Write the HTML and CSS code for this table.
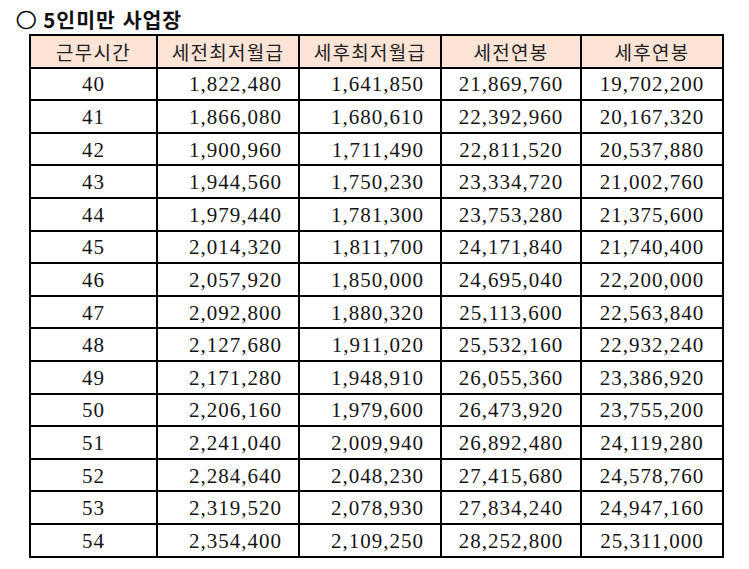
FILE: index.html
```html
<!DOCTYPE html>
<html lang="ko">
<head>
<meta charset="utf-8">
<link rel="stylesheet" href="styles.css">
</head>
<body>
<div class="page">
  <h1 class="title"><span class="circle">○</span> 5인미만 사업장</h1>
  <table class="wage">
    <colgroup>
      <col class="c1"><col class="c2"><col class="c3"><col class="c4"><col class="c5">
    </colgroup>
    <thead>
      <tr><th>근무시간</th><th>세전최저월급</th><th>세후최저월급</th><th>세전연봉</th><th>세후연봉</th></tr>
    </thead>
    <tbody>
      <tr><td class="ctr">40</td><td class="r">1,822,480</td><td class="r">1,641,850</td><td class="ctr">21,869,760</td><td class="ctr">19,702,200</td></tr>
      <tr><td class="ctr">41</td><td class="r">1,866,080</td><td class="r">1,680,610</td><td class="ctr">22,392,960</td><td class="ctr">20,167,320</td></tr>
      <tr><td class="ctr">42</td><td class="r">1,900,960</td><td class="r">1,711,490</td><td class="ctr">22,811,520</td><td class="ctr">20,537,880</td></tr>
      <tr><td class="ctr">43</td><td class="r">1,944,560</td><td class="r">1,750,230</td><td class="ctr">23,334,720</td><td class="ctr">21,002,760</td></tr>
      <tr><td class="ctr">44</td><td class="r">1,979,440</td><td class="r">1,781,300</td><td class="ctr">23,753,280</td><td class="ctr">21,375,600</td></tr>
      <tr><td class="ctr">45</td><td class="r">2,014,320</td><td class="r">1,811,700</td><td class="ctr">24,171,840</td><td class="ctr">21,740,400</td></tr>
      <tr><td class="ctr">46</td><td class="r">2,057,920</td><td class="r">1,850,000</td><td class="ctr">24,695,040</td><td class="ctr">22,200,000</td></tr>
      <tr><td class="ctr">47</td><td class="r">2,092,800</td><td class="r">1,880,320</td><td class="ctr">25,113,600</td><td class="ctr">22,563,840</td></tr>
      <tr><td class="ctr">48</td><td class="r">2,127,680</td><td class="r">1,911,020</td><td class="ctr">25,532,160</td><td class="ctr">22,932,240</td></tr>
      <tr><td class="ctr">49</td><td class="r">2,171,280</td><td class="r">1,948,910</td><td class="ctr">26,055,360</td><td class="ctr">23,386,920</td></tr>
      <tr><td class="ctr">50</td><td class="r">2,206,160</td><td class="r">1,979,600</td><td class="ctr">26,473,920</td><td class="ctr">23,755,200</td></tr>
      <tr><td class="ctr">51</td><td class="r">2,241,040</td><td class="r">2,009,940</td><td class="ctr">26,892,480</td><td class="ctr">24,119,280</td></tr>
      <tr><td class="ctr">52</td><td class="r">2,284,640</td><td class="r">2,048,230</td><td class="ctr">27,415,680</td><td class="ctr">24,578,760</td></tr>
      <tr><td class="ctr">53</td><td class="r">2,319,520</td><td class="r">2,078,930</td><td class="ctr">27,834,240</td><td class="ctr">24,947,160</td></tr>
      <tr><td class="ctr">54</td><td class="r">2,354,400</td><td class="r">2,109,250</td><td class="ctr">28,252,800</td><td class="ctr">25,311,000</td></tr>
    </tbody>
  </table>
</div>
</body>
</html>
```

FILE: styles.css
```css
html, body {
  margin: 0;
  padding: 0;
  background: #ffffff;
}

.page {
  padding: 7px 0 0 16px;
}

.title {
  margin: 0;
  height: 27px;
  font-family: "Noto Sans CJK KR", "Noto Sans", sans-serif;
  font-weight: 700;
  font-size: 20.5px;
  line-height: 24px;
  color: #111;
  letter-spacing: 1px;
}

.circle {
  font-weight: 700;
  -webkit-text-stroke: 0.7px #111;
  letter-spacing: 0;
}

.wage {
  margin-left: 13px;
  border-collapse: collapse;
  table-layout: fixed;
  width: 695px;
  color: #151515;
}

.c1 { width: 127px; }
.c2 { width: 142px; }
.c3 { width: 142px; }
.c4 { width: 140px; }
.c5 { width: 142px; }

.wage th,
.wage td {
  border: 2px solid #000;
  height: 32.6px;
  padding: 0;
  box-sizing: border-box;
}

.wage th {
  background: #fce4d6;
  font-family: "Noto Sans CJK KR", sans-serif;
  font-weight: 400;
  font-size: 19px;
  letter-spacing: 1.3px;
  text-align: center;
  color: #222;
}

.wage td {
  font-family: "Liberation Serif", "Times New Roman", serif;
  font-size: 21px;
  letter-spacing: 1px;
  padding-top: 2px;
}

.wage td.ctr {
  text-align: center;
}

.wage td.r {
  text-align: right;
  padding-right: 16px;
}
```
